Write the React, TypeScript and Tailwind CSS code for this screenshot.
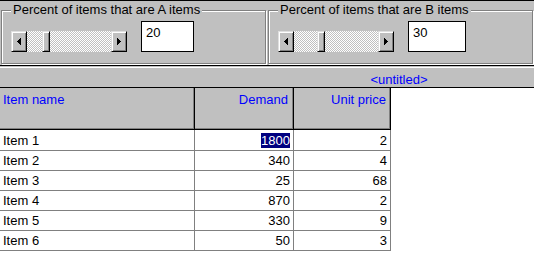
import React from "react";

function Arrow({ dir }: { dir: "l" | "r" }) {
  const rects = [0, 1, 2, 3].map((i) => {
    const h = 1 + i * 2;
    const x = dir === "l" ? i : 3 - i;
    return <rect key={i} x={x} y={3 - i} width={1} height={h} fill="#000" />;
  });
  return (
    <svg width="4" height="7" viewBox="0 0 4 7" shapeRendering="crispEdges">
      {rects}
    </svg>
  );
}

function Btn({ dir, w = "w-[16px]" }: { dir?: "l" | "r"; w?: string }) {
  return (
    <div
      className={`${w} h-full shrink-0 bg-[#c0c0c0] border border-t-[#dfdfdf] border-l-[#dfdfdf] border-r-black border-b-black shadow-[inset_1px_1px_0_#fff,inset_-1px_-1px_0_#808080] flex items-center justify-center`}
    >
      {dir ? <Arrow dir={dir} /> : null}
    </div>
  );
}

function Scrollbar({ offset }: { offset: string }) {
  return (
    <div className="flex h-[21px] w-[116px] shrink-0">
      <Btn dir="l" />
      <div className="flex flex-1 h-full bg-[repeating-conic-gradient(#c0c0c0_0_25%,#ffffff_0_50%)] [background-size:2px_2px]">
        <div className={offset} />
        <Btn w="w-[8px]" />
      </div>
      <Btn dir="r" />
    </div>
  );
}

function Group({
  label,
  value,
  offset,
  boxW,
}: {
  label: string;
  value: string;
  offset: string;
  boxW: string;
}) {
  return (
    <div className="relative w-[265px] h-[54px] shrink-0 border border-[#808080] shadow-[inset_1px_1px_0_#fff,1px_1px_0_#fff]">
      <div className="absolute left-[9px] top-[-9px] px-[2px] bg-[#c0c0c0] text-[13px] leading-[15px] whitespace-nowrap">
        {label}
      </div>
      <div className="flex items-end pl-[9px] pt-[10px] gap-[14px]">
        <Scrollbar offset={offset} />
        <div className={`${boxW} h-[31px] bg-white border border-black pl-[4px] pt-[3px]`}>
          {value}
        </div>
      </div>
    </div>
  );
}

const rows: [string, string, string][] = [
  ["Item 1", "1800", "2"],
  ["Item 2", "340", "4"],
  ["Item 3", "25", "68"],
  ["Item 4", "870", "2"],
  ["Item 5", "330", "9"],
  ["Item 6", "50", "3"],
];

export default function App() {
  return (
    <div className="w-[534px] h-[261px] bg-white overflow-hidden font-['Liberation_Sans',Arial,sans-serif] text-[13px] leading-[15px] text-black">
      {/* top panel */}
      <div className="h-[66px] bg-[#c0c0c0] border-t border-b border-black flex gap-[2px] pl-[1px] pt-[9px]">
        <Group
          label="Percent of items that are A items"
          value="20"
          offset="w-[15px]"
          boxW="w-[53px]"
        />
        <Group
          label="Percent of items that are B items"
          value="30"
          offset="w-[23px]"
          boxW="w-[58px]"
        />
      </div>
      {/* title bar */}
      <div className="h-[22px] bg-[#c0c0c0] border-b border-black shadow-[inset_0_1px_0_#c0c0c0,inset_0_2px_0_#fff] flex pt-[6px]">
        <div className="w-[264px] shrink-0" />
        <div className="flex-1 text-center text-[#0000ff]">&lt;untitled&gt;</div>
      </div>
      {/* header */}
      <div className="flex h-[42px]">
        <div className="w-[195px] h-full bg-[#c0c0c0] border-r border-b border-black shadow-[inset_-1px_-1px_0_#808080] pl-[3px] pt-[4px] text-[#0000ff]">
          Item name
        </div>
        <div className="w-[99px] h-full bg-[#c0c0c0] border-r border-b border-black shadow-[inset_-1px_-1px_0_#808080] pr-[5px] pt-[4px] text-right text-[#0000ff]">
          Demand
        </div>
        <div className="w-[97px] h-full bg-[#c0c0c0] border-r border-b border-black shadow-[inset_-1px_-1px_0_#808080] pr-[4px] pt-[4px] text-right text-[#0000ff]">
          Unit price
        </div>
      </div>
      {/* rows */}
      {rows.map(([name, demand, price], i) => {
        const h = i === 0 ? "h-[21px] pt-[3px]" : "h-[20px] pt-[2px]";
        return (
          <div key={name} className="flex">
            <div className={`w-[195px] ${h} border-r border-b border-[#808080] pl-[3px]`}>
              {name}
            </div>
            <div className={`w-[99px] ${h} border-r border-b border-[#808080] pr-[3px] text-right`}>
              {i === 0 ? (
                <span className="bg-[#000080] text-white">{demand}</span>
              ) : (
                demand
              )}
            </div>
            <div className={`w-[97px] ${h} border-r border-b border-[#808080] pr-[3px] text-right`}>
              {price}
            </div>
          </div>
        );
      })}
    </div>
  );
}
